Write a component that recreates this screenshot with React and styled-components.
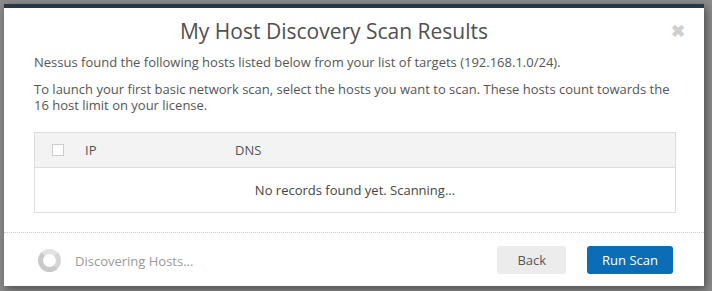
import React from "react";
import styled, { createGlobalStyle } from "styled-components";

const GlobalStyle = createGlobalStyle`
  html, body {
    margin: 0;
    padding: 0;
    background: #8a8a8a;
    font-family: "Open Sans", "Liberation Sans", sans-serif;
  }
  * { box-sizing: border-box; }
`;

const Page = styled.div`
  width: 712px;
  height: 291px;
  padding: 4px 0 0 4px;
`;

const Modal = styled.div`
  width: 700px;
  height: 282px;
  background: #fff;
  border-top: 4px solid #283846;
  box-shadow: 2px 3px 8px rgba(0, 0, 0, 0.45);
  display: flex;
  flex-direction: column;
  position: relative;
`;

const Header = styled.div`
  padding: 9px 70px 0 30px;
  text-align: center;
`;

const Title = styled.h3`
  margin: 0;
  font-size: 21px;
  line-height: 28px;
  font-weight: 400;
  color: #505050;
`;

const Close = styled.span`
  position: absolute;
  right: 19px;
  top: 11px;
  font-size: 17px;
  font-weight: 700;
  color: #cfcfcf;
  cursor: pointer;
`;

const Body = styled.div`
  padding: 0 28px 0 30px;
  flex: 1;
`;

const Text = styled.p`
  margin: ${(p) => p.$mt || 0}px 0 0;
  font-size: 13px;
  line-height: 16px;
  color: #555;
`;

const Table = styled.div`
  margin-top: 19px;
  border: 1px solid #ddd;
`;

const HeadRow = styled.div`
  display: flex;
  align-items: center;
  height: 35px;
  background: #f3f3f3;
  border-bottom: 1px solid #ddd;
  padding-left: 17px;
  font-size: 13px;
  color: #555;
`;

const Check = styled.span`
  width: 12px;
  height: 12px;
  border: 1px solid #ccc;
  background: #fff;
  margin-right: 21px;
`;

const Col = styled.span`
  width: ${(p) => p.$w}px;
`;

const Empty = styled.div`
  height: 44px;
  display: flex;
  align-items: center;
  justify-content: center;
  font-size: 13px;
  color: #444;
`;

const Footer = styled.div`
  height: 54px;
  border-top: 1px dotted #ccc;
  display: flex;
  align-items: center;
  padding: 0 31px 0 30px;
`;

const Spinner = styled.span`
  width: 23px;
  height: 23px;
  border-radius: 50%;
  border: 5px solid #c9c9c9;
  border-top-color: #e2e2e2;
  border-right-color: #d6d6d6;
  margin: 2px 14px 0 4px;
`;

const Status = styled.span`
  font-size: 13px;
  color: #999;
  flex: 1;
  padding-top: 2px;
`;

const Button = styled.button`
  height: 28px;
  padding: 0 ${(p) => (p.$primary ? 15 : 20)}px;
  margin-left: ${(p) => (p.$primary ? 21 : 0)}px;
  border: none;
  border-radius: 3px;
  font-family: inherit;
  font-size: 13px;
  background: ${(p) => (p.$primary ? "#0a6db6" : "#ececec")};
  color: ${(p) => (p.$primary ? "#fff" : "#555")};
  cursor: pointer;
`;

export default function App() {
  return (
    <Page>
      <GlobalStyle />
      <Modal>
        <Header>
          <Title>My Host Discovery Scan Results</Title>
        </Header>
        <Close>&#x2716;</Close>
        <Body>
          <Text $mt={9}>
            Nessus found the following hosts listed below from your list of targets (192.168.1.0/24).
          </Text>
          <Text $mt={11}>
            To launch your first basic network scan, select the hosts you want to scan. These hosts count towards the 16 host limit on your license.
          </Text>
          <Table>
            <HeadRow>
              <Check />
              <Col $w={150}>IP</Col>
              <Col $w={200}>DNS</Col>
            </HeadRow>
            <Empty>No records found yet. Scanning...</Empty>
          </Table>
        </Body>
        <Footer>
          <Spinner />
          <Status>Discovering Hosts...</Status>
          <Button>Back</Button>
          <Button $primary>Run Scan</Button>
        </Footer>
      </Modal>
    </Page>
  );
}
